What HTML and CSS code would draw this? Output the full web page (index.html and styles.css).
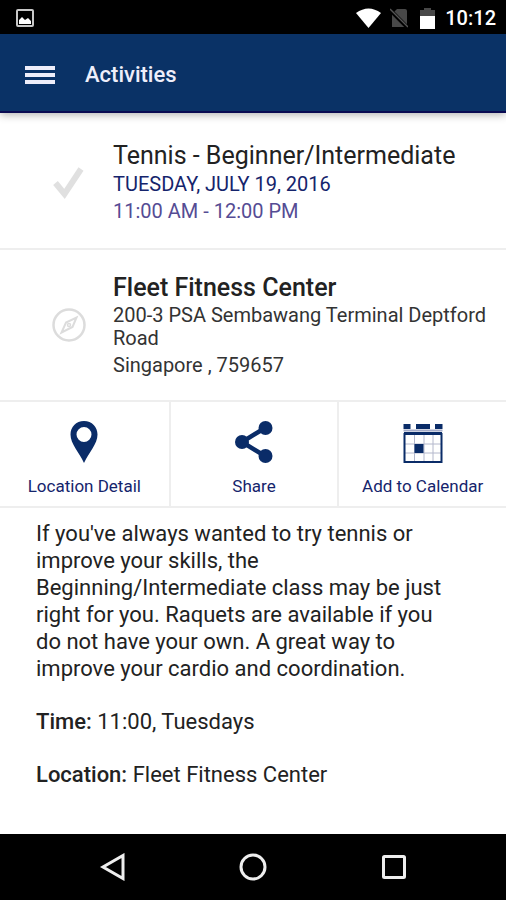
FILE: index.html
```html
<!DOCTYPE html>
<html lang="en">
  <head>
    <meta charset="UTF-8" />
    <meta name="viewport" content="width=device-width, initial-scale=1" />
    <title>Activities</title>
    <link rel="stylesheet" href="styles.css">
  </head>
  <body>
    <div class="status-bar">
      <svg width="18" height="18" viewBox="0 0 18 18">
        <rect x="1" y="1" width="16" height="16" rx="1" fill="none" stroke="#c8c8c8" stroke-width="2" />
        <path d="M3 15v-4l3-3 3 3 3-2 3 3v3z" fill="#fff" />
      </svg>
      <div class="status-right">
        <svg class="wifi" width="25" height="20" viewBox="0 0 25 20">
          <path d="M0 5Q12.500-4 25 5L12.500 20z" fill="#fff" />
        </svg>
        <svg class="no-sim" width="18" height="20" viewBox="0 0 18 20">
          <path d="M7 1h8q2 0 2 2v16H2V6z" fill="#484848" />
          <path d="M0 2l17 17" stroke="#000" stroke-width="4" />
          <path d="M0 1l18 18" stroke="#555" stroke-width="1.500" />
        </svg>
        <svg class="battery" width="15" height="22" viewBox="0 0 15 22">
          <path d="M0 3h4V1h7v2h4v7H0z" fill="#484848" />
          <path d="M0 9h15v13H0z" fill="#fff" />
        </svg>
        <span>10:12</span>
      </div>
    </div>

    <header class="app-bar">
      <button class="menu-button" type="button" aria-label="Menu">
        <svg width="30" height="20" viewBox="0 0 30 20">
          <path d="M0 3h30M0 10h30M0 17h30" stroke="#eeeefa" stroke-width="4" />
        </svg>
      </button>
      <h1>Activities</h1>
    </header>

    <main>
      <section class="row">
        <div class="row-icon">
          <svg width="32" height="34" viewBox="0 0 32 34">
            <path d="M3.500 17l9 11L29 3" fill="none" stroke="#e0e0e0" stroke-width="6" />
          </svg>
        </div>
        <div class="row-text">
          <h2 class="event-name">Tennis - Beginner/Intermediate</h2>
          <p class="event-date">TUESDAY, JULY 19, 2016</p>
          <p class="event-time">11:00 AM - 12:00 PM</p>
        </div>
      </section>

      <section class="row place">
        <div class="row-icon">
          <svg width="34" height="34" viewBox="0 0 34 34" fill="none" stroke="#dcdcdc">
            <circle cx="17" cy="17" r="15.500" stroke-width="2.500" />
            <path d="M24.500 9.500L20.500 19L9.500 24.500L14 14.500z" stroke-width="2" />
            <circle cx="17" cy="17" r="1.500" stroke-width="1.500" />
          </svg>
        </div>
        <div class="row-text">
          <h2 class="place-name">Fleet Fitness Center</h2>
          <p class="street">200-3 PSA Sembawang Terminal Deptford Road</p>
          <p class="city">Singapore , 759657</p>
        </div>
      </section>

      <div class="actions">
        <button type="button">
          <svg width="28" height="44" viewBox="0 0 28 44">
            <path d="M14 1C6 1 .5 7 .5 14.500C.5 24 9 32 14 43C19 32 27.500 24 27.500 14.500C27.500 7 22 1 14 1zM14 7a7.500 7.500 0 1 1 0 15a7.500 7.500 0 1 1 0-15z" fill="#0a2c68" fill-rule="evenodd" />
          </svg>
          <span>Location Detail</span>
        </button>
        <button type="button">
          <svg width="38" height="44" viewBox="0 0 38 44">
            <path d="M30 8L7 22l23 14" fill="none" stroke="#0a2c68" stroke-width="4.500" />
            <g fill="#0a2c68">
              <circle cx="30.500" cy="8" r="7" />
              <circle cx="7" cy="22" r="7" />
              <circle cx="30.500" cy="36" r="7" />
            </g>
          </svg>
          <span>Share</span>
        </button>
        <button type="button">
          <svg width="40" height="44" viewBox="0 0 40 44">
            <path d="M.5 4h7v5h-7zM13 4h14v5H13zM32 4h7.500v5H32z" fill="#0a2c68" />
            <path d="M.5 10.500h39" stroke="#a4abc8" stroke-width="2" />
            <path d="M11.500 15v27M21 15v27M30 15v27M2 24h36M2 33h36" stroke="#b4b8cc" />
            <path d="M1.500 14h37v28h-37z" fill="none" stroke="#0a2c68" stroke-width="2" />
            <path d="M1 13.500h38" stroke="#0a2c68" stroke-width="3" />
            <path d="M11.500 24h9v9h-9z" fill="#0a2c68" />
          </svg>
          <span>Add to Calendar</span>
        </button>
      </div>

      <section class="description">
        <p>If you've always wanted to try tennis or improve your skills, the Beginning/Intermediate class may be just right for you. Raquets are available if you do not have your own. A great way to improve your cardio and coordination.</p>
        <p><strong>Time:</strong> 11:00, Tuesdays</p>
        <p><strong>Location:</strong> Fleet Fitness Center</p>
      </section>
    </main>

    <nav class="nav-bar">
      <button type="button" aria-label="Back">
        <svg width="28" height="28" viewBox="0 0 28 28">
          <path d="M25 2.500v23L5 14z" fill="none" stroke="#eee" stroke-width="3" />
        </svg>
      </button>
      <button type="button" aria-label="Home">
        <svg width="28" height="28" viewBox="0 0 28 28">
          <circle cx="14" cy="14" r="12" fill="none" stroke="#eee" stroke-width="3" />
        </svg>
      </button>
      <button type="button" aria-label="Recent apps">
        <svg width="28" height="28" viewBox="0 0 28 28">
          <rect x="3.500" y="3.500" width="21" height="21" rx="1" fill="none" stroke="#eee" stroke-width="3" />
        </svg>
      </button>
    </nav>
  </body>
</html>
```

FILE: styles.css
```css
* {
  box-sizing: border-box;
}

body {
  margin: 0;
  min-height: 100vh;
  display: flex;
  flex-direction: column;
  font-family: Roboto, sans-serif;
  color: #222;
  background-color: #fff;
}

h1,
h2,
p {
  margin: 0;
  font-weight: 400;
}

svg {
  display: block;
}

button {
  margin: 0;
  padding: 0;
  border: 0;
  background: none;
  font-family: inherit;
  cursor: pointer;
}

/* phone status bar */
.status-bar {
  height: 34px;
  padding: 2px 10px 0 16px;
  display: flex;
  align-items: center;
  justify-content: space-between;
  background-color: #000;
}

.status-right {
  display: flex;
  align-items: center;
  color: #fff;
  font-size: 20px;
  font-weight: 500;
}

.no-sim {
  margin-left: 9px;
}

.battery {
  margin: 0 10px 0 12px;
}

/* app header */
.app-bar {
  height: 79px;
  padding: 4px 25px 0;
  display: flex;
  align-items: center;
  gap: 30px;
  background-color: #0a3266;
  border-bottom: 2px solid #090a52;
  box-shadow: 0 2px 8px rgba(0, 0, 0, 0.3);
}

.app-bar h1 {
  color: #eeeefa;
  font-size: 22px;
  font-weight: 500;
}

main {
  flex: 1;
}

.row {
  display: flex;
  align-items: center;
  padding: 28px 16px 23px 0;
  border-bottom: 2px solid #eee;
}

.row-icon {
  flex: 0 0 113px;
  padding-left: 52px;
}

.event-name {
  font-size: 25px;
  line-height: 30px;
}

.event-date,
.event-time {
  font-size: 20px;
  line-height: 27px;
}

.event-date {
  color: #15246c;
}

.event-time {
  color: #554c94;
}

.place {
  padding: 22px 16px 23px 0;
}

.place-name {
  font-size: 25px;
  font-weight: 500;
  line-height: 32px;
}

.street,
.city {
  font-size: 20px;
  line-height: 23px;
  color: #333;
}

.city {
  margin-top: 4px;
}

/* three buttons under the address */
.actions {
  display: grid;
  grid-template-columns: repeat(3, 1fr);
  border-bottom: 2px solid #eee;
}

.actions button {
  display: flex;
  flex-direction: column;
  align-items: center;
  gap: 12px;
  padding: 18px 0 10px;
  color: #15246c;
  font-size: 17px;
  line-height: 20px;
}

.actions button + button {
  border-left: 2px solid #eee;
}

.description {
  padding: 12px 50px 40px 36px;
  font-size: 22px;
  line-height: 27px;
}

.description p + p {
  margin-top: 26px;
}

.description strong {
  font-weight: 500;
}

/* phone navigation bar */
.nav-bar {
  height: 66px;
  padding: 0 98px;
  display: flex;
  align-items: center;
  justify-content: space-between;
  background-color: #000;
}
```
